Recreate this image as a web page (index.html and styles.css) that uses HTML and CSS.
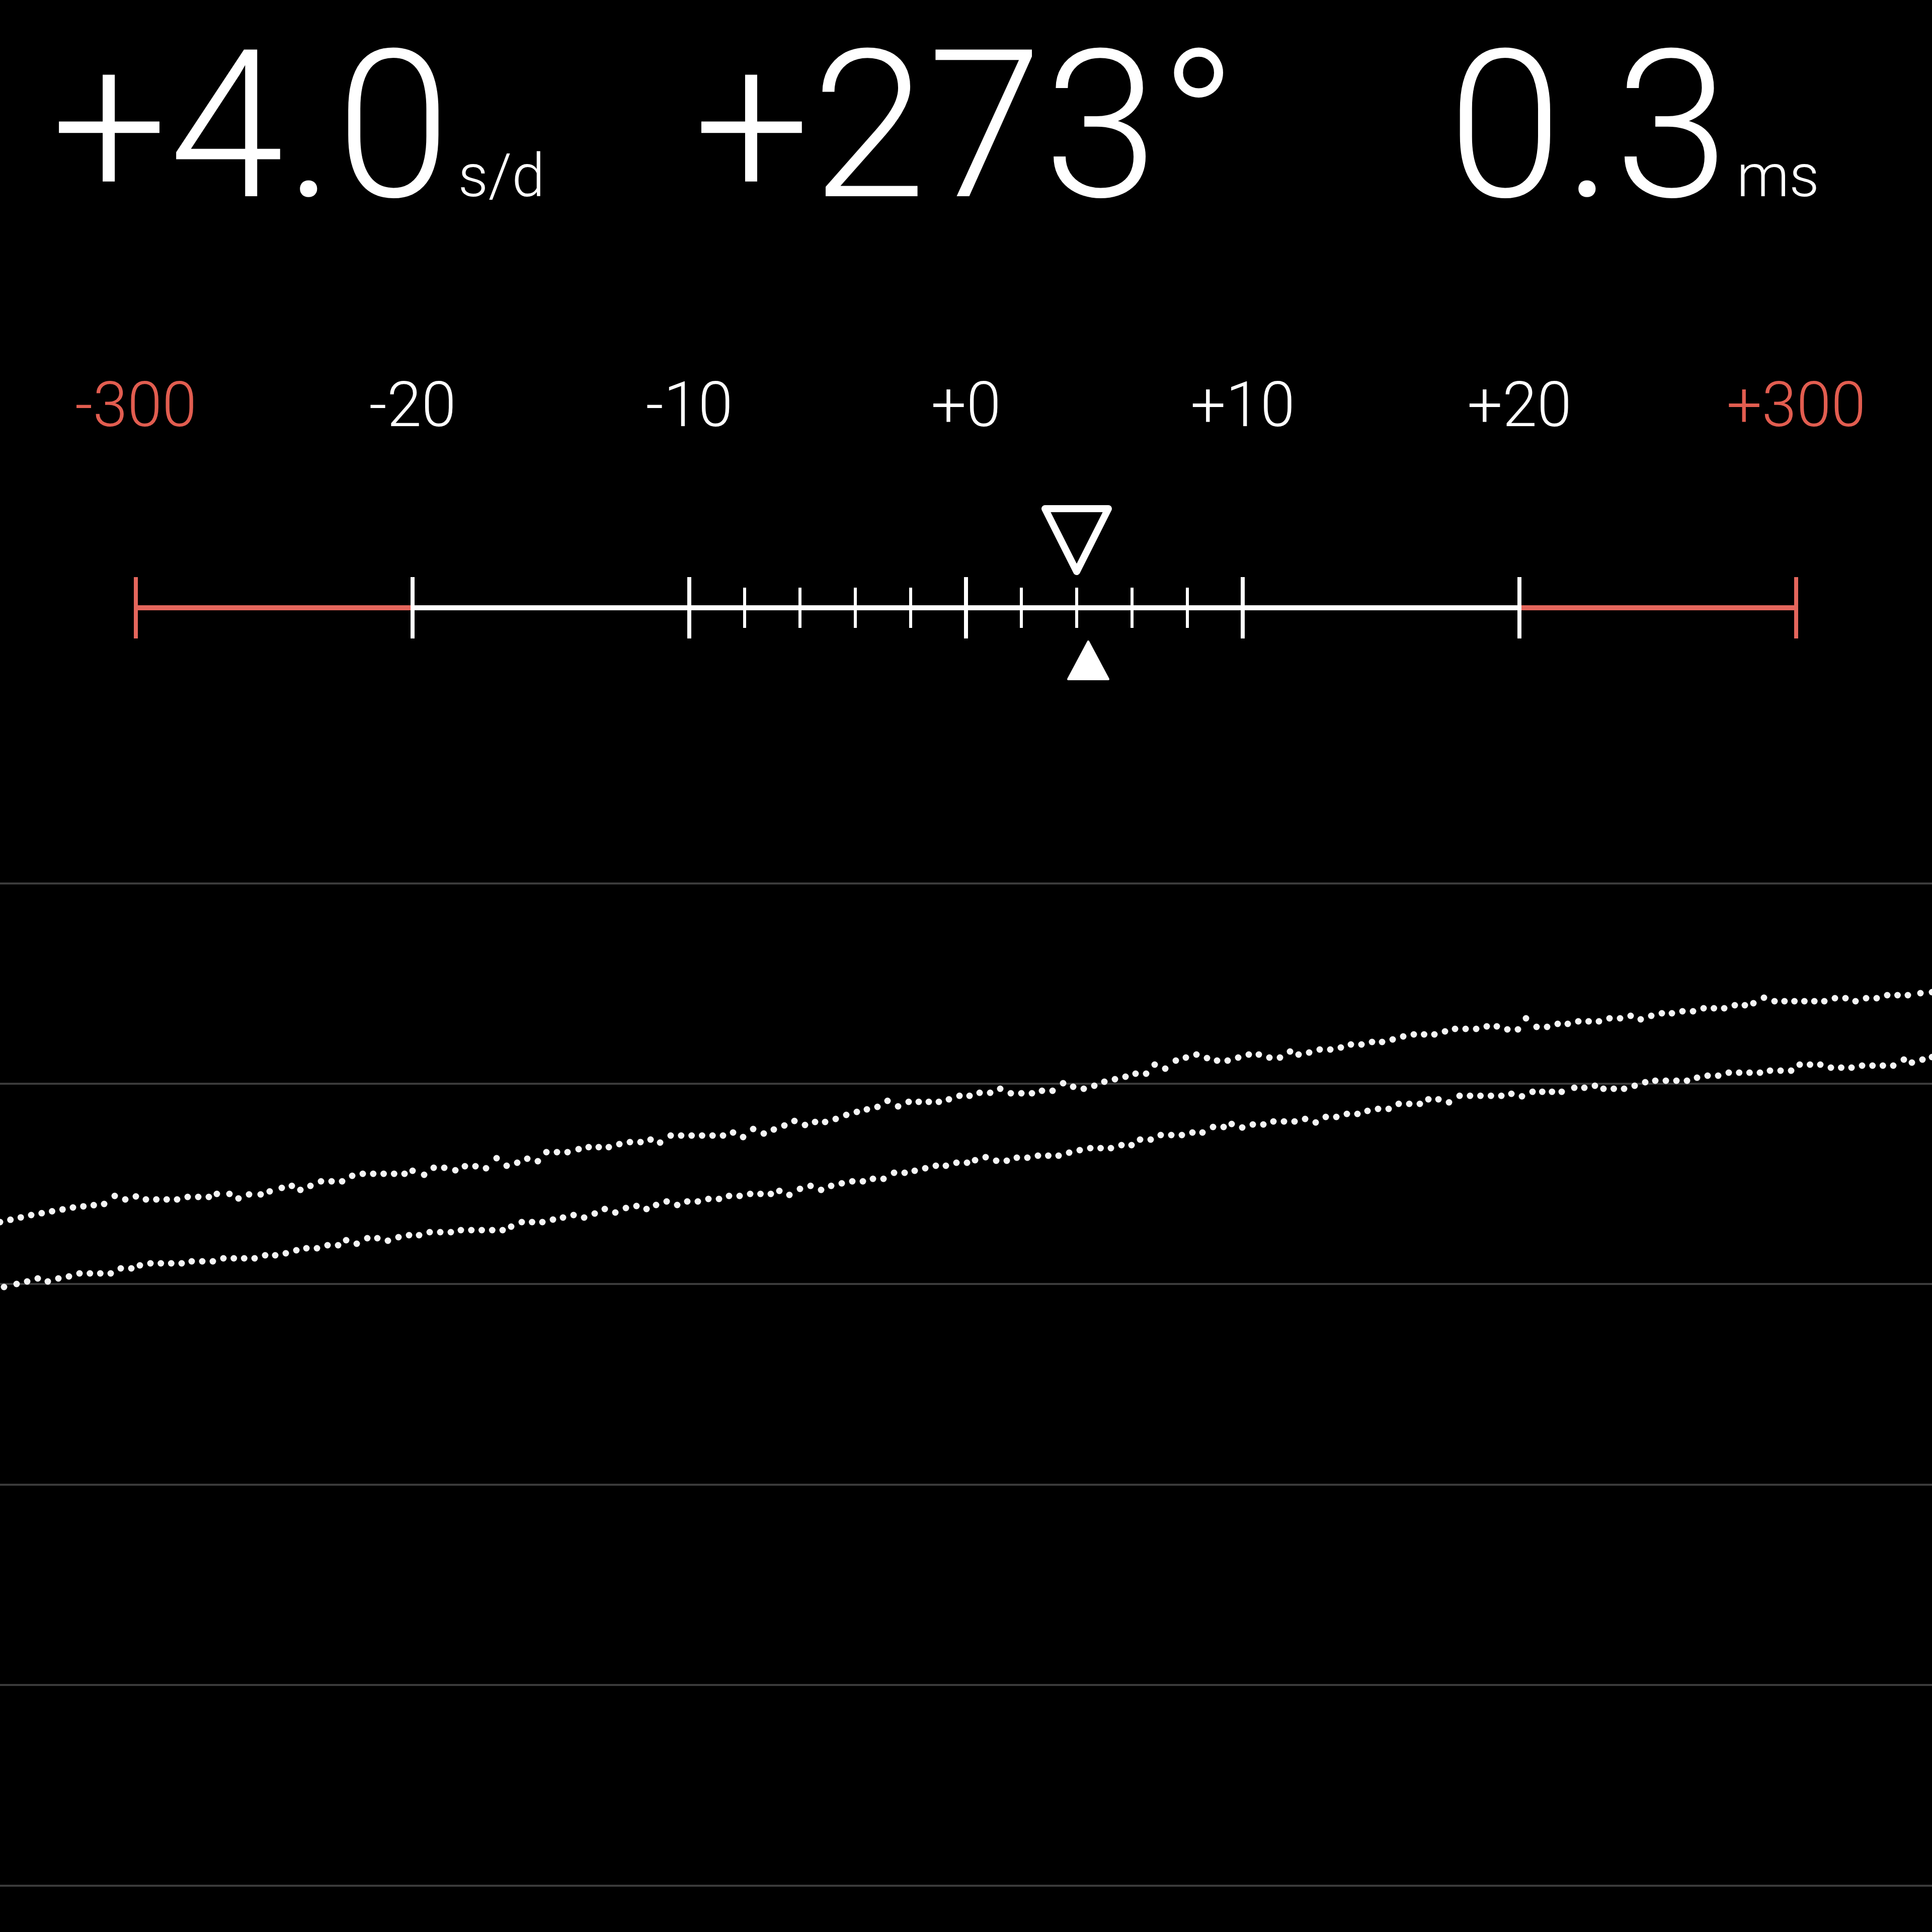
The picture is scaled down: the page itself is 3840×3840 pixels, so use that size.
FILE: index.html
```html
<!DOCTYPE html>
<html lang="en">
<head>
    <meta charset="UTF-8">
    <meta name="viewport" content="width=device-width, initial-scale=1.0">
    <title>Timegrapher</title>
    <link rel="stylesheet" href="styles.css">
</head>
<body>

    <div class="screen">
        <div class="readouts">
            <div class="readout rate">
                <span class="value">+4.0</span><span class="unit">s/d</span>
            </div>
            <div class="readout lift">
                <span class="value">+273°</span>
            </div>
            <div class="readout error">
                <span class="value">0.3</span><span class="unit">ms</span>
            </div>
        </div>

        <div class="labels">
            <span class="over">-300</span>
            <span>-20</span>
            <span>-10</span>
            <span>+0</span>
            <span>+10</span>
            <span>+20</span>
            <span class="over">+300</span>
        </div>

        <svg class="gauge" viewBox="0 980 3840 400" width="3840" height="400">
            <line class="bar over" x1="270" y1="1208" x2="820" y2="1208"/>
            <line class="bar" x1="820" y1="1208" x2="3020" y2="1208"/>
            <line class="bar over" x1="3020" y1="1208" x2="3570" y2="1208"/>

            <!-- major ticks every 10 s/d, ends are the out-of-range marks -->
            <line class="tick major over" x1="270" y1="1147" x2="270" y2="1269"/>
            <line class="tick major" x1="820" y1="1147" x2="820" y2="1269"/>
            <line class="tick major" x1="1370" y1="1147" x2="1370" y2="1269"/>
            <line class="tick major" x1="1920" y1="1147" x2="1920" y2="1269"/>
            <line class="tick major" x1="2470" y1="1147" x2="2470" y2="1269"/>
            <line class="tick major" x1="3020" y1="1147" x2="3020" y2="1269"/>
            <line class="tick major over" x1="3570" y1="1147" x2="3570" y2="1269"/>

            <!-- minor ticks every 2 s/d -->
            <line class="tick" x1="1480" y1="1168" x2="1480" y2="1248"/>
            <line class="tick" x1="1590" y1="1168" x2="1590" y2="1248"/>
            <line class="tick" x1="1700" y1="1168" x2="1700" y2="1248"/>
            <line class="tick" x1="1810" y1="1168" x2="1810" y2="1248"/>
            <line class="tick" x1="2030" y1="1168" x2="2030" y2="1248"/>
            <line class="tick" x1="2140" y1="1168" x2="2140" y2="1248"/>
            <line class="tick" x1="2250" y1="1168" x2="2250" y2="1248"/>
            <line class="tick" x1="2360" y1="1168" x2="2360" y2="1248"/>

            <polygon class="pointer" points="2077,1011 2203,1011 2140,1136"/>
            <polygon class="marker" points="2163,1275 2123,1350 2203,1350"/>
        </svg>

        <svg class="chart" id="chart" viewBox="0 1754 3840 2086" width="3840" height="2086">
            <line class="grid" x1="0" y1="1756" x2="3840" y2="1756"/>
            <line class="grid" x1="0" y1="2154" x2="3840" y2="2154"/>
            <line class="grid" x1="0" y1="2552" x2="3840" y2="2552"/>
            <line class="grid" x1="0" y1="2951" x2="3840" y2="2951"/>
            <line class="grid" x1="0" y1="3349" x2="3840" y2="3349"/>
            <line class="grid" x1="0" y1="3748" x2="3840" y2="3748"/>
        </svg>
    </div>

    <script src="script.js"></script>

</body>
</html>
```

FILE: styles.css
```css
body {
    margin: 0;
    background-color: #000000;
    color: #ffffff;
    font-family: Roboto, "Liberation Sans", sans-serif;
    font-weight: 300;
}
.screen {
    width: 3840px;
    height: 3840px;
    overflow: hidden;
}
.readouts {
    display: flex;
    align-items: baseline;
    padding-top: 45px;
    padding-left: 102px;
    line-height: 1;
}
.readout {
    display: flex;
    align-items: baseline;
}
.readout .value {
    font-size: 410px;
    letter-spacing: 3px;
}
.readout .unit {
    font-size: 118px;
    margin-left: 12px;
}
.lift {
    margin-left: 296px;
}
.error {
    margin-left: 415px;
}
.labels {
    display: grid;
    grid-template-columns: repeat(7, 550px);
    margin: 288px -5px 0;
    font-size: 124px;
    line-height: 1;
    text-align: center;
}
.labels .over {
    color: #e25d50;
}
.gauge {
    display: block;
    margin-top: 113px;
}
.bar {
    stroke: #ffffff;
    stroke-width: 10;
}
.tick {
    stroke: #ffffff;
    stroke-width: 6;
}
.tick.major {
    stroke-width: 8;
}
.bar.over, .tick.over {
    stroke: #e4665c;
}
.pointer {
    fill: none;
    stroke: #ffffff;
    stroke-width: 14;
    stroke-linejoin: round;
}
.marker {
    fill: #ffffff;
    stroke: #ffffff;
    stroke-width: 4;
    stroke-linejoin: round;
}
.chart {
    display: block;
    margin-top: 374px;
}
.grid {
    stroke: #3b3b3b;
    stroke-width: 4;
}
.dot {
    fill: #f5f5f5;
}
```

FILE: script.js
```js
// beat traces, key points in page pixels; dots are filled in between
const upper = [
    [0,2429],[62,2415],[145,2400],[207,2393],[228,2377],[249,2384],[270,2378],[290,2384],[352,2384],
    [373,2379],[415,2379],[431,2373],[456,2373],[474,2382],[495,2374],[518,2374],[536,2368],[560,2361],
    [580,2357],[597,2365],[617,2357],[638,2348],[680,2348],[700,2337],[721,2333],[804,2333],[820,2327],
    [843,2335],[862,2321],[883,2321],[905,2326],[924,2318],[945,2318],[966,2322],[987,2302],[1007,2317],
    [1028,2311],[1048,2303],[1069,2308],[1086,2290],[1128,2290],[1150,2284],[1170,2280],[1210,2280],
    [1231,2274],[1252,2270],[1273,2270],[1293,2265],[1312,2271],[1333,2257],[1437,2257],[1457,2251],
    [1477,2260],[1497,2244],[1518,2253],[1538,2245],[1559,2237],[1579,2228],[1600,2236],[1620,2230],
    [1640,2230],[1661,2224],[1682,2216],[1703,2210],[1723,2205],[1744,2200],[1764,2188],[1785,2199],
    [1806,2190],[1866,2190],[1886,2185],[1907,2178],[1927,2178],[1947,2172],[1968,2172],[1988,2164],
    [2009,2173],[2051,2173],[2071,2168],[2092,2168],[2113,2153],[2133,2160],[2154,2164],[2175,2158],
    [2195,2150],[2216,2145],[2237,2140],[2257,2134],[2278,2134],[2295,2116],[2316,2124],[2337,2108],
    [2357,2102],[2378,2096],[2399,2103],[2419,2108],[2440,2108],[2461,2102],[2482,2096],[2502,2096],
    [2523,2102],[2544,2102],[2564,2090],[2581,2096],[2602,2092],[2623,2086],[2644,2086],[2665,2082],
    [2685,2076],[2706,2076],[2727,2071],[2747,2071],[2768,2066],[2789,2060],[2810,2056],[2851,2056],
    [2872,2050],[2892,2045],[2934,2045],[2955,2040],[2975,2040],[2996,2046],[3017,2046],[3033,2024],
    [3054,2041],[3075,2041],[3096,2035],[3116,2035],[3137,2030],[3178,2030],[3199,2024],[3220,2024],
    [3241,2019],[3261,2026],[3282,2019],[3303,2014],[3323,2014],[3344,2010],[3365,2010],[3386,2004],
    [3427,2004],[3448,1998],[3468,1998],[3485,1994],[3506,1983],[3527,1990],[3626,1990],[3647,1984],
    [3668,1984],[3688,1990],[3709,1984],[3730,1984],[3751,1978],[3792,1978],[3817,1974],[3840,1972]
];

const lower = [
    [8,2558],[33,2552],[54,2547],[75,2541],[95,2547],[116,2541],[137,2537],[158,2531],[220,2531],
    [240,2521],[261,2521],[278,2515],[299,2511],[361,2511],[381,2507],[423,2507],[444,2501],[506,2501],
    [527,2495],[547,2495],[568,2491],[589,2485],[609,2481],[630,2481],[651,2475],[672,2475],[688,2465],
    [709,2472],[730,2461],[750,2461],[771,2466],[792,2459],[813,2455],[833,2455],[854,2449],[896,2449],
    [916,2445],[999,2445],[1016,2438],[1037,2429],[1078,2429],[1099,2424],[1119,2420],[1140,2415],
    [1161,2420],[1182,2412],[1202,2403],[1223,2410],[1244,2401],[1265,2397],[1285,2403],[1304,2395],
    [1325,2388],[1346,2395],[1366,2388],[1387,2388],[1408,2383],[1429,2383],[1449,2377],[1470,2377],
    [1491,2373],[1532,2373],[1549,2367],[1569,2375],[1590,2363],[1611,2357],[1632,2365],[1652,2357],
    [1673,2352],[1694,2348],[1715,2348],[1735,2343],[1756,2343],[1777,2331],[1798,2331],[1818,2327],
    [1839,2322],[1860,2317],[1880,2317],[1901,2311],[1922,2311],[1938,2306],[1959,2300],[1980,2307],
    [2001,2307],[2021,2301],[2042,2301],[2063,2297],[2104,2297],[2125,2291],[2146,2286],[2167,2282],
    [2208,2282],[2229,2276],[2249,2276],[2266,2265],[2287,2265],[2307,2256],[2349,2256],[2370,2251],
    [2390,2251],[2411,2240],[2432,2240],[2448,2234],[2469,2241],[2490,2235],[2511,2235],[2531,2229],
    [2573,2229],[2594,2224],[2615,2231],[2635,2220],[2656,2220],[2677,2214],[2698,2214],[2718,2208],
    [2739,2204],[2760,2204],[2780,2194],[2822,2194],[2839,2185],[2859,2185],[2880,2191],[2901,2178],
    [2984,2178],[3004,2174],[3025,2179],[3046,2170],[3104,2170],[3129,2162],[3149,2162],[3170,2158],
    [3187,2164],[3228,2164],[3249,2158],[3270,2151],[3290,2148],[3353,2148],[3373,2142],[3394,2138],
    [3415,2138],[3436,2132],[3498,2132],[3518,2128],[3560,2128],[3577,2116],[3618,2116],[3639,2122],
    [3680,2122],[3701,2118],[3763,2118],[3784,2106],[3800,2112],[3821,2106],[3840,2101]
];

const chart = document.getElementById("chart");
const step = 20.6;

function addDot(x, y) {
    let dot = document.createElementNS("http://www.w3.org/2000/svg", "circle");
    dot.setAttribute("class", "dot");
    dot.setAttribute("cx", x.toFixed(1));
    dot.setAttribute("cy", y.toFixed(1));
    dot.setAttribute("r", 6.5);
    chart.appendChild(dot);
}

function drawTrace(points) {
    for (let i = 0; i < points.length - 1; i++) {
        let [x1, y1] = points[i];
        let [x2, y2] = points[i + 1];
        let count = Math.max(1, Math.round((x2 - x1) / step));
        for (let s = 0; s < count; s++) {
            addDot(x1 + (x2 - x1) * s / count, y1 + (y2 - y1) * s / count);
        }
    }
    let last = points[points.length - 1];
    addDot(last[0], last[1]);
}

drawTrace(upper);
drawTrace(lower);
```
